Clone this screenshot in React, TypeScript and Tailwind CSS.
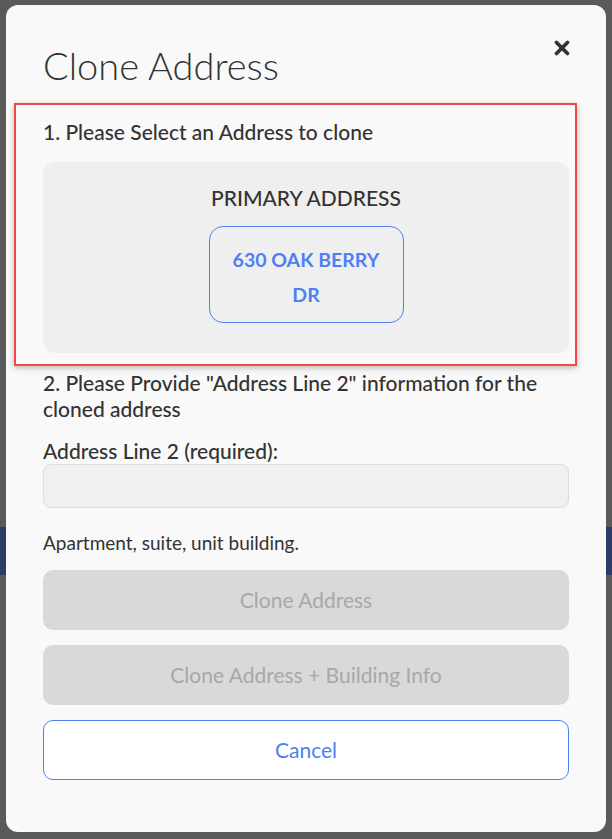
import { X } from "lucide-react";

const font = { fontFamily: "Lato, 'Open Sans', sans-serif" };

export default function App() {
  return (
    <div className="relative min-h-screen w-full bg-[#5a5a5a] p-[5px] pl-[6px]" style={font}>
      {/* dimmed page behind the dialog */}
      <div className="absolute left-0 right-0 top-[527px] h-[48px] bg-[#2d3c66]" />

      <div className="relative w-[600px] rounded-[12px] bg-[#f9f9f9] px-[37px] pt-[38px] pb-[52px] text-[#333]">
        <button className="absolute right-[33px] top-[32px] text-[#333]">
          <X size={22} strokeWidth={4} />
        </button>

        <h1 className="text-[38px] font-light leading-[44px] text-[#333]">Clone Address</h1>

        {/* review highlight */}
        <div className="pointer-events-none absolute left-[8px] top-[98px] h-[263px] w-[563px] border-2 border-[#f44848] shadow-[0_2px_6px_rgba(0,0,0,0.25)]" />

        <p className="mt-[32px] text-[21px] font-medium leading-[26px]">
          1. Please Select an Address to clone
        </p>

        <div className="mt-[17px] flex flex-col items-center rounded-[12px] bg-[#efefef] pt-[22px] pb-[30px]">
          <p className="text-[21px] font-medium leading-[28px]">PRIMARY ADDRESS</p>
          <button className="mt-[14px] w-[195px] rounded-[14px] border border-[#4f7ff5] px-4 pt-[15px] pb-[10px] text-[19.5px] font-bold leading-[35px] text-[#4f7ff5]">
            630 OAK BERRY DR
          </button>
        </div>

        <p className="mt-[17px] text-[21px] font-medium leading-[26px]">
          2. Please Provide "Address Line 2" information for the cloned address
        </p>

        <label className="mt-4 block text-[21px] font-medium leading-[26px]">
          Address Line 2 (required):
        </label>
        <input className="block h-[44px] w-full rounded-[8px] border border-[#dddddd] bg-[#f0f0f0] px-3 outline-none" />

        <p className="mt-[23px] text-[19px] leading-[24px]">Apartment, suite, unit building.</p>

        <div className="mt-[15px] flex flex-col gap-[15px]">
          <button disabled className="h-[60px] w-full rounded-[10px] bg-[#d9d9d9] text-[21px] text-[#a8a8a8]">
            Clone Address
          </button>
          <button disabled className="h-[60px] w-full rounded-[10px] bg-[#d9d9d9] text-[21px] text-[#a8a8a8]">
            Clone Address + Building Info
          </button>
          <button className="h-[60px] w-full rounded-[10px] border border-[#4f7ff5] bg-white text-[21px] text-[#4f7ff5]">
            Cancel
          </button>
        </div>
      </div>
    </div>
  );
}
